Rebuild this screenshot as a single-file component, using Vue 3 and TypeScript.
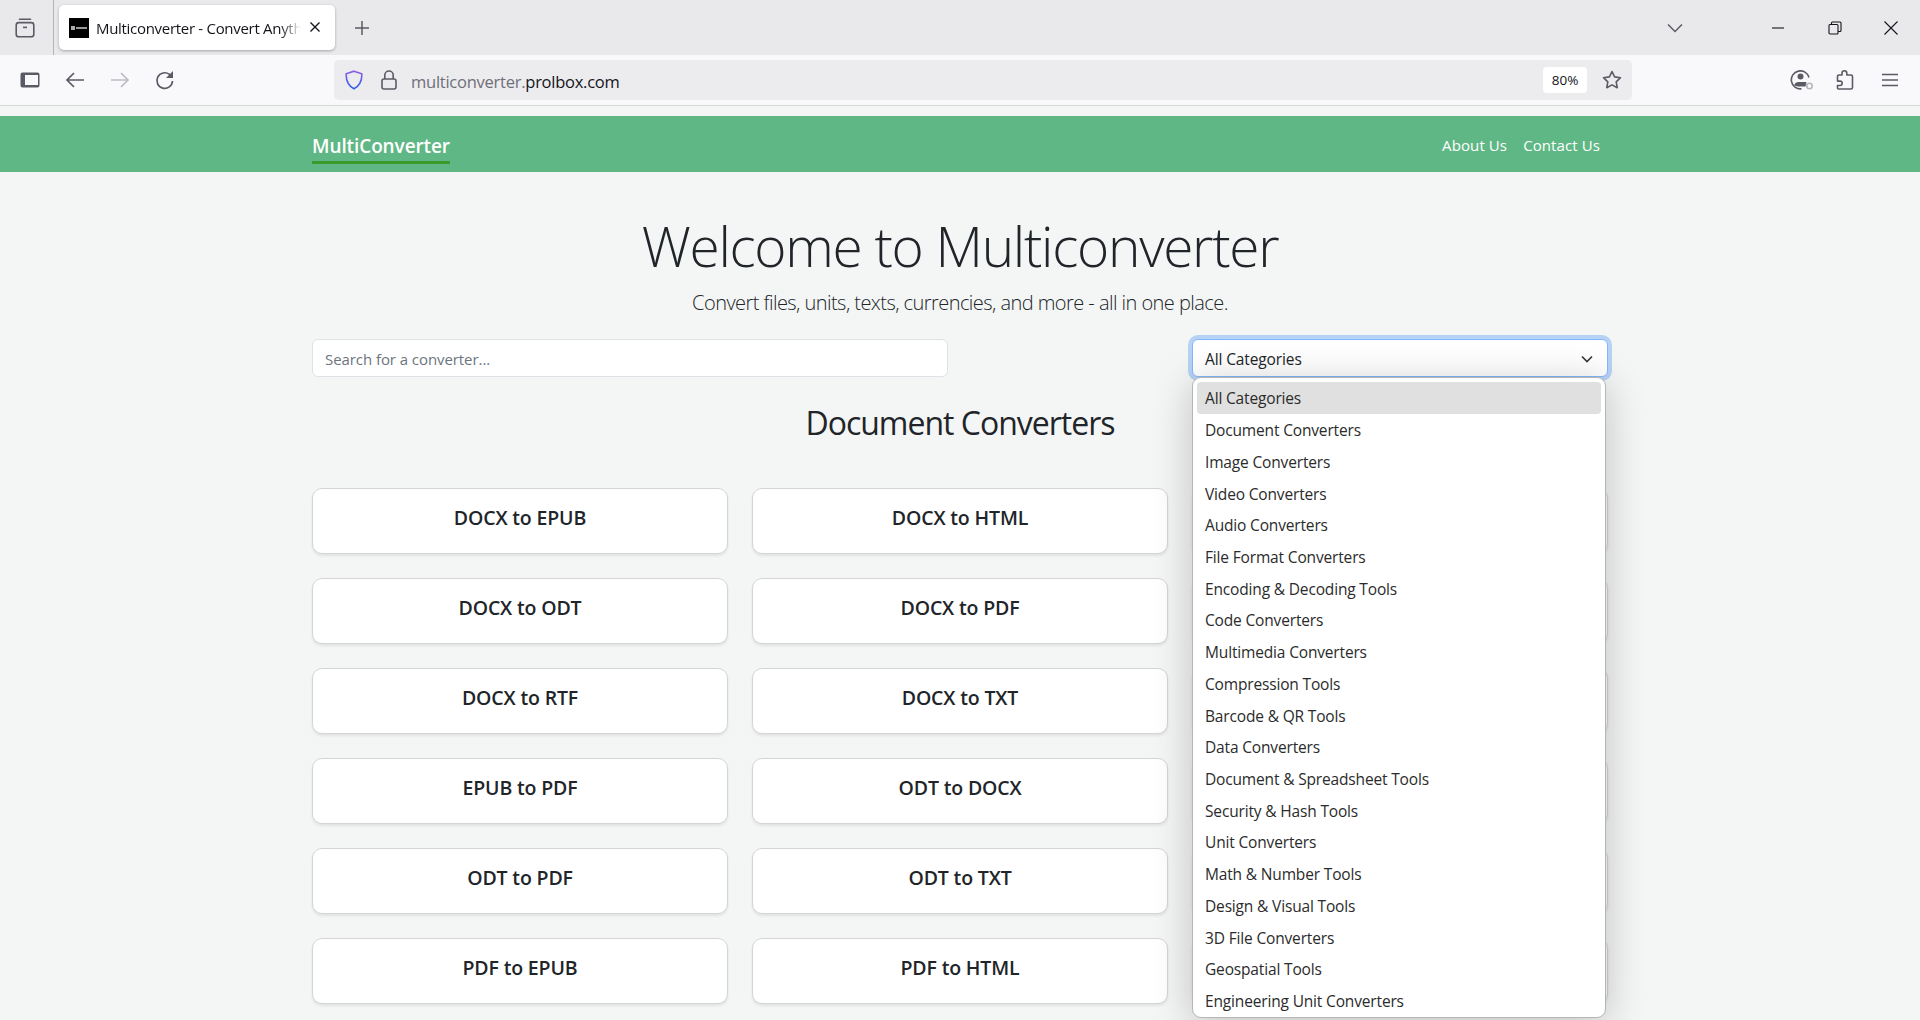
<template>
  <div class="window">
    <!-- Browser tab strip -->
    <div class="tabstrip">
      <button class="strip-btn view-btn" aria-label="Firefox View">
        <svg width="20" height="20" viewBox="0 0 20 20" fill="none" stroke="#5b5b66" stroke-width="1.6">
          <path d="M4.5 1.2h11" stroke-linecap="round" />
          <rect x="1.2" y="4.6" width="17.6" height="14.2" rx="2.6" />
          <path d="M8 9.4h4" />
        </svg>
      </button>
      <div class="tab">
        <svg class="favicon" width="20" height="20" viewBox="0 0 20 20">
          <rect width="20" height="20" fill="#000" />
          <rect x="2" y="8" width="4" height="4" fill="#aaa" />
          <rect x="7" y="9" width="11" height="2" fill="#999" />
        </svg>
        <span class="tab-title">Multiconverter - Convert Anything</span>
        <svg class="tab-close" width="12" height="12" viewBox="0 0 12 12" stroke="#15141a" stroke-width="1.4">
          <path d="M1.5 1.5l9 9M10.5 1.5l-9 9" />
        </svg>
      </div>
      <svg class="new-tab" width="16" height="16" viewBox="0 0 16 16" stroke="#5b5b66" stroke-width="1.5">
        <path d="M8 1v14M1 8h14" />
      </svg>
      <div class="strip-right">
        <svg class="all-tabs" width="16" height="10" viewBox="0 0 16 10" fill="none" stroke="#5b5b66" stroke-width="1.5">
          <path d="M1 1.5l7 7 7-7" />
        </svg>
        <div class="win-controls">
          <svg width="14" height="14" viewBox="0 0 14 14" stroke="#15141a" stroke-width="1.1"><path d="M1 7h12" /></svg>
          <svg width="14" height="14" viewBox="0 0 14 14" fill="none" stroke="#15141a" stroke-width="1.1">
            <rect x="1" y="3.5" width="9" height="9.5" rx="1" />
            <path d="M3.5 3.5V2a1 1 0 0 1 1-1H12a1 1 0 0 1 1 1v7.5a1 1 0 0 1-1 1h-2" />
          </svg>
          <svg width="14" height="14" viewBox="0 0 14 14" stroke="#15141a" stroke-width="1.1"><path d="M.5.5l13 13M13.5.5l-13 13" /></svg>
        </div>
      </div>
    </div>

    <!-- Browser toolbar -->
    <div class="toolbar">
      <div class="nav-icons">
        <svg width="20" height="16" viewBox="0 0 20 16">
          <path fill="#5b5b66" fill-rule="evenodd" d="M2.5.5h15a2 2 0 0 1 2 2v11a2 2 0 0 1-2 2h-15a2 2 0 0 1-2-2v-11a2 2 0 0 1 2-2zM5 3v10h13V3z" />
        </svg>
        <svg width="20" height="18" viewBox="0 0 20 18" fill="none" stroke="#5b5b66" stroke-width="1.7">
          <path d="M19 9H2M9 2L2 9l7 7" />
        </svg>
        <svg width="20" height="18" viewBox="0 0 20 18" fill="none" stroke="#bcbcc2" stroke-width="1.7">
          <path d="M1 9h17M11 2l7 7-7 7" />
        </svg>
        <svg width="20" height="20" viewBox="0 0 20 20" fill="none" stroke="#5b5b66" stroke-width="1.7">
          <path d="M17.5 11a7.8 7.8 0 1 1-3-6.6L16 6" />
          <path d="M18 1v7h-7z" fill="#5b5b66" stroke="none" />
        </svg>
      </div>
      <div class="urlbar">
        <svg class="shield" width="18" height="20" viewBox="0 0 18 20" fill="none" stroke-width="1.6">
          <defs>
            <linearGradient id="shieldStroke" x1="0" y1="0" x2="0" y2="1">
              <stop offset="0" stop-color="#8a5ce6" />
              <stop offset="1" stop-color="#2f5fe8" />
            </linearGradient>
          </defs>
          <path d="M9 1.2L16.8 3.8c.3 6.4-1.6 11.5-7.8 15-6.2-3.5-8.1-8.6-7.8-15z" stroke="url(#shieldStroke)" />
        </svg>
        <svg class="lock" width="16" height="20" viewBox="0 0 16 20" fill="none" stroke="#5b5b66" stroke-width="1.6">
          <rect x="1" y="9" width="14" height="10" rx="2" />
          <path d="M3.8 9V5.2a4.2 4.2 0 0 1 8.4 0V9" />
        </svg>
        <span class="url"><span class="url-muted">multiconverter.</span>prolbox.com</span>
        <span class="zoom-level">80%</span>
        <svg class="star" width="20" height="20" viewBox="0 0 20 20" fill="none" stroke="#5b5b66" stroke-width="1.6" stroke-linejoin="round">
          <path d="M10 1.5l2.6 5.4 5.9.8-4.3 4.1 1 5.9-5.2-2.8-5.2 2.8 1-5.900-4.300-4.100 5.900-.8z" />
        </svg>
      </div>
      <div class="tool-icons">
        <svg class="account" width="24" height="22" viewBox="0 0 24 22" fill="none" stroke="#5b5b66" stroke-width="1.6">
          <path d="M19 8.500a9 9 0 1 0-7.500 11.300" />
          <circle cx="10.500" cy="7.500" r="3" fill="#5b5b66" stroke="none" />
          <path d="M4.200 16c.8-2 2.300-3 4.300-3h8l-1 4.500H10c-2.500 0-4.500-.4-5.800-1.500z" fill="#5b5b66" stroke="none" />
          <circle cx="19.500" cy="17" r="2.700" stroke="#b4b4ba" />
        </svg>
        <svg class="puzzle" width="18" height="20" viewBox="0 0 18 20" fill="none" stroke="#5b5b66" stroke-width="1.6" stroke-linejoin="round">
          <path d="M6 5V3.200a2.400 2.400 0 0 1 4.800 0V5H15a1.500 1.500 0 0 1 1.500 1.500v11A1.500 1.500 0 0 1 15 19H2.500a1 1 0 0 1-1-1v-2.500H4a2.200 2.200 0 0 0 0-4.400H1.500V6.500A1.500 1.500 0 0 1 3 5z" />
        </svg>
        <svg width="16" height="14" viewBox="0 0 16 14" stroke="#5b5b66" stroke-width="1.5">
          <path d="M0 1.500h16M0 7h16M0 12.500h16" />
        </svg>
      </div>
    </div>

    <!-- Page -->
    <div class="page">
      <nav class="navbar">
        <a class="brand">MultiConverter</a>
        <div class="nav-links">
          <a>About Us</a>
          <a>Contact Us</a>
        </div>
      </nav>

      <main class="content">
        <h1>Welcome to Multiconverter</h1>
        <p class="lead">Convert files, units, texts, currencies, and more - all in one place.</p>

        <div class="filters">
          <input class="search" type="text" placeholder="Search for a converter..." />
          <div class="category-wrap">
            <div class="category-select">
              <span>All Categories</span>
              <svg width="12" height="8" viewBox="0 0 12 8" fill="none" stroke="#343a40" stroke-width="1.7">
                <path d="M1 1.500l5 5 5-5" />
              </svg>
            </div>
            <ul class="category-menu">
              <li v-for="(cat, i) in categories" :key="cat" :class="{ active: i === 0 }">{{ cat }}</li>
            </ul>
          </div>
        </div>

        <h2>Document Converters</h2>

        <div class="grid">
          <a v-for="(card, i) in cards" :key="i" class="card">{{ card }}</a>
        </div>
      </main>
    </div>
  </div>
</template>

<script setup lang="ts">
const categories: string[] = [
  'All Categories',
  'Document Converters',
  'Image Converters',
  'Video Converters',
  'Audio Converters',
  'File Format Converters',
  'Encoding & Decoding Tools',
  'Code Converters',
  'Multimedia Converters',
  'Compression Tools',
  'Barcode & QR Tools',
  'Data Converters',
  'Document & Spreadsheet Tools',
  'Security & Hash Tools',
  'Unit Converters',
  'Math & Number Tools',
  'Design & Visual Tools',
  '3D File Converters',
  'Geospatial Tools',
  'Engineering Unit Converters',
];

// third column sits behind the open menu, so its labels can't be read
const cards: string[] = [
  'DOCX to EPUB', 'DOCX to HTML', '',
  'DOCX to ODT', 'DOCX to PDF', '',
  'DOCX to RTF', 'DOCX to TXT', '',
  'EPUB to PDF', 'ODT to DOCX', '',
  'ODT to PDF', 'ODT to TXT', '',
  'PDF to EPUB', 'PDF to HTML', '',
];
</script>

<style scoped>
.window {
  height: 1020px;
  display: flex;
  flex-direction: column;
  overflow: hidden;
  font-family: "Open Sans", "Liberation Sans", sans-serif;
  background: #f4f6f5;
  color: #212529;
}

.tabstrip {
  height: 55px;
  flex: none;
  display: flex;
  align-items: center;
  background: #e9e9ec;
}

.strip-btn {
  width: 54px;
  height: 55px;
  padding: 0 0 0 15px;
  display: flex;
  align-items: center;
  background: none;
  border: 0;
  border-right: 1px solid #b4b4b8;
}

.tab {
  width: 276px;
  height: 45px;
  margin-left: 5px;
  padding: 0 15px 0 10px;
  box-sizing: border-box;
  display: flex;
  align-items: center;
  background: #fff;
  border-radius: 5px;
  box-shadow: 0 1px 3px rgba(0, 0, 0, 0.3);
}

.favicon {
  flex: none;
}

.tab-title {
  flex: 1;
  margin: 0 8px 0 7px;
  overflow: hidden;
  white-space: nowrap;
  font-size: 15px;
  letter-spacing: -0.3px;
  color: #15141a;
  -webkit-mask-image: linear-gradient(90deg, #000 90%, transparent);
  mask-image: linear-gradient(90deg, #000 90%, transparent);
}

.tab-close {
  flex: none;
  margin: -2px -1px 0 0;
}

.new-tab {
  margin-left: 19px;
}

.strip-right {
  margin-left: auto;
  display: flex;
  align-items: center;
}

.all-tabs {
  margin-right: 88px;
}

.win-controls {
  display: flex;
  gap: 42.5px;
  margin-right: 22px;
}

.toolbar {
  height: 51px;
  flex: none;
  box-sizing: border-box;
  display: flex;
  align-items: center;
  padding-bottom: 1px;
  background: #f9f9fb;
  border-bottom: 1px solid #d8d8dc;
}

.nav-icons {
  width: 334px;
  flex: none;
  box-sizing: border-box;
  padding-left: 20px;
  display: flex;
  align-items: center;
  gap: 25px;
}

.urlbar {
  width: 1298px;
  height: 40px;
  flex: none;
  box-sizing: border-box;
  padding: 0 10px 0 11px;
  display: flex;
  align-items: center;
  background: #ececef;
  border-radius: 5px;
}

.lock {
  margin-left: 18px;
}

.url {
  margin: 3px 0 0 14px;
  font-size: 16.5px;
  letter-spacing: -0.25px;
  color: #15141a;
}

.url-muted {
  color: #6f6f78;
}

.zoom-level {
  margin-left: auto;
  width: 44px;
  height: 26px;
  display: flex;
  align-items: center;
  justify-content: center;
  background: #fff;
  border-radius: 4px;
  font-size: 13.5px;
  color: #15141a;
}

.star {
  margin-left: 15px;
}

.tool-icons {
  flex: 1;
  display: flex;
  align-items: center;
  justify-content: flex-end;
  gap: 24px;
  padding-right: 22px;
}

.account {
  margin-right: -2px;
}

.puzzle {
  margin-right: 4px;
}

.page {
  flex: 1;
  padding-top: 10px;
  min-height: 0;
}

.navbar {
  height: 56px;
  box-sizing: border-box;
  padding: 0 320px 0 312px;
  display: flex;
  align-items: center;
  justify-content: space-between;
  background: #5fb785;
}

.brand {
  align-self: flex-end;
  margin-bottom: 8px;
  padding-bottom: 2px;
  line-height: 26px;
  color: #fff;
  font-size: 19px;
  font-weight: 600;
  letter-spacing: -0.1px;
  border-bottom: 3px solid #3a9a2b;
}

.nav-links {
  display: flex;
  gap: 16px;
  margin-top: 1px;
  font-size: 15px;
  letter-spacing: 0.1px;
  color: #fff;
}

.content {
  width: 1296px;
  margin: 0 auto;
}

h1 {
  margin: 37.5px 0 0;
  text-align: center;
  font-size: 55px;
  line-height: 72px;
  font-weight: 300;
  letter-spacing: -1.3px;
  color: #212529;
}

.lead {
  margin: 6px 0 0;
  text-align: center;
  font-size: 20px;
  line-height: 30px;
  font-weight: 300;
  letter-spacing: -0.55px;
}

.filters {
  margin-top: 21.5px;
  display: flex;
  justify-content: space-between;
  align-items: flex-start;
}

.search {
  width: 636px;
  height: 38px;
  box-sizing: border-box;
  padding: 1px 12px 0;
  font: inherit;
  font-size: 15px;
  letter-spacing: -0.07px;
  background: #fff;
  border: 1px solid #dee2e6;
  border-radius: 6px;
  outline: none;
}

.search::placeholder {
  color: #6c757d;
}

.category-wrap {
  position: relative;
  width: 416px;
}

.category-select {
  height: 38px;
  box-sizing: border-box;
  padding: 1px 14px 0 12px;
  display: flex;
  align-items: center;
  justify-content: space-between;
  font-size: 15.5px;
  letter-spacing: -0.12px;
  background: #fff;
  border: 1px solid #86b7fe;
  border-radius: 6px;
  box-shadow: 0 0 0 4px #b6d2f5;
}

.category-menu {
  position: absolute;
  top: 38px;
  left: 0;
  width: 414px;
  height: 641px;
  z-index: 5;
  margin: 0;
  padding: 4px 4px 0;
  box-sizing: border-box;
  list-style: none;
  overflow: hidden;
  background: #fff;
  border: 1px solid #b5b5b5;
  border-radius: 9px;
  box-shadow: 0 6px 40px rgba(0, 0, 0, 0.22);
}

.category-menu li {
  height: 31.72px;
  box-sizing: border-box;
  padding: 1px 0 0 8px;
  display: flex;
  align-items: center;
  font-size: 15.5px;
  letter-spacing: -0.16px;
  color: #2b2b2b;
  border-radius: 4px;
}

.category-menu li.active {
  background: #e0e0e0;
}

h2 {
  margin: 25px 0 0;
  text-align: center;
  font-size: 32px;
  line-height: 42px;
  font-weight: 400;
  letter-spacing: -1px;
}

.grid {
  margin-top: 44px;
  display: grid;
  grid-template-columns: repeat(3, 416px);
  justify-content: space-between;
  grid-auto-rows: 65.5px;
  row-gap: 24.5px;
}

.card {
  box-sizing: border-box;
  padding-top: 15px;
  text-align: center;
  font-size: 19.5px;
  line-height: 27px;
  font-weight: 600;
  letter-spacing: -0.15px;
  background: #fff;
  border: 1px solid #d5d5d5;
  border-radius: 10px;
  box-shadow: 0 2px 3px rgba(0, 0, 0, 0.08);
}
</style>

<style>
html,
body {
  margin: 0;
  height: 100%;
  overflow: hidden;
}
</style>
